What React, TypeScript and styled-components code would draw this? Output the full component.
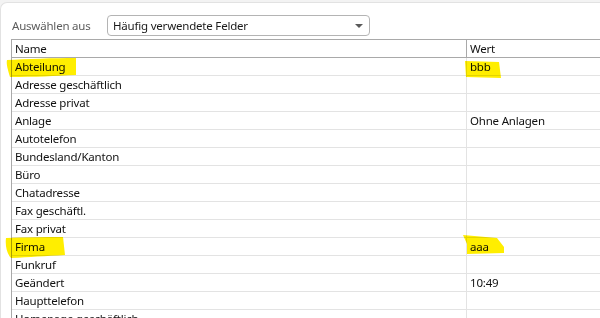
import styled, { createGlobalStyle } from "styled-components";

const GlobalStyle = createGlobalStyle`
  html, body {
    margin: 0;
    padding: 0;
    background: #f3f3f3;
    overflow: hidden;
  }
  body {
    font-family: "Noto Sans", "Open Sans", sans-serif;
    letter-spacing: -0.2px;
  }
`;

type Row = {
  name: string;
  value?: string;
  nameMark?: string;
  valueMark?: string;
};

// marker strokes, coordinates relative to the cell's top-left corner
const markAbteilung = "M-8 2 C10 1 40 0 61 0 L61 17 C40 18 20 19 -5 19 C-7 12 -9 6 -8 2 Z";
const markBbb = "M-4 3 L30 4 L32 20 L-3 19 Z";
const markFirma = "M-9 0 C10 -1 30 -1 48 -1 L50 17 C30 18 15 19 -4 20 C-8 16 -10 8 -9 0 Z";
const markAaa = "M-6 -3 L28 0 L35 9 L35 15 L-2 16 L-2 6 Z";

const rows: Row[] = [
  { name: "Abteilung", value: "bbb", nameMark: markAbteilung, valueMark: markBbb },
  { name: "Adresse geschäftlich" },
  { name: "Adresse privat" },
  { name: "Anlage", value: "Ohne Anlagen" },
  { name: "Autotelefon" },
  { name: "Bundesland/Kanton" },
  { name: "Büro" },
  { name: "Chatadresse" },
  { name: "Fax geschäftl." },
  { name: "Fax privat" },
  { name: "Firma", value: "aaa", nameMark: markFirma, valueMark: markAaa },
  { name: "Funkruf" },
  { name: "Geändert", value: "10:49" },
  { name: "Haupttelefon" },
  { name: "Homepage geschäftlich" },
];

function Marker({ d }: { d: string }) {
  return (
    <MarkSvg width="120" height="40" viewBox="-20 -10 120 40">
      <path d={d} fill="#ffee00" />
    </MarkSvg>
  );
}

export default function App() {
  return (
    <>
      <GlobalStyle />
      <Panel>
        <Toolbar>
          <Label>Auswählen aus</Label>
          <Select>
            <span>Häufig verwendete Felder</span>
            <Arrow />
          </Select>
        </Toolbar>
        <Table>
          <HeaderRow>
            <HeadCell>Name</HeadCell>
            <HeadCell $divider>Wert</HeadCell>
          </HeaderRow>
          {rows.map((r) => (
            <BodyRow key={r.name}>
              <NameCell>
                {r.nameMark && <Marker d={r.nameMark} />}
                <Text>{r.name}</Text>
              </NameCell>
              <ValueCell>
                {r.valueMark && <Marker d={r.valueMark} />}
                <Text>{r.value}</Text>
              </ValueCell>
            </BodyRow>
          ))}
        </Table>
      </Panel>
    </>
  );
}

const Panel = styled.div`
  margin-top: 2px;
  height: 316px;
  background: #ffffff;
  border-top: 1px solid #e2e2e2;
  border-left: 1px solid #e2e2e2;
  border-top-left-radius: 7px;
  overflow: hidden;
`;

const Toolbar = styled.div`
  display: flex;
  align-items: center;
  height: 21px;
  padding: 12px 0 0 11px;
  margin-bottom: 3px;
`;

const Label = styled.div`
  width: 95px;
  font-size: 11.5px;
  color: #5c5c5c;
`;

const Select = styled.div`
  box-sizing: border-box;
  display: flex;
  align-items: center;
  justify-content: space-between;
  width: 263px;
  height: 21px;
  padding: 0 6px 0 5px;
  border: 1px solid #b4b4b4;
  border-radius: 4px;
  font-size: 11.5px;
  color: #1a1a1a;
`;

const Arrow = styled.span`
  width: 0;
  height: 0;
  border-left: 4px solid transparent;
  border-right: 4px solid transparent;
  border-top: 4px solid #5a5a5a;
  margin-top: 1px;
`;

const Table = styled.div`
  margin-left: 10px;
  width: 700px;
  border-left: 1px solid #a9a9a9;
  border-top: 1px solid #a9a9a9;
  font-size: 11.5px;
  color: #111;
`;

const HeaderRow = styled.div`
  display: grid;
  grid-template-columns: 454px 1fr;
  height: 17px;
  border-bottom: 1px solid #a9a9a9;
`;

const HeadCell = styled.div<{ $divider?: boolean }>`
  display: flex;
  align-items: center;
  padding-left: 3px;
  border-left: ${(p) => (p.$divider ? "1px solid #a9a9a9" : "none")};
`;

const BodyRow = styled.div`
  display: grid;
  grid-template-columns: 454px 1fr;
  height: 17px;
  border-bottom: 1px solid #e3e3e3;
`;

const NameCell = styled.div`
  position: relative;
  display: flex;
  align-items: center;
  padding-left: 3px;
  border-right: 1px solid #e3e3e3;
  margin-right: -1px;
`;

const ValueCell = styled.div`
  position: relative;
  display: flex;
  align-items: center;
  padding-left: 4px;
`;

const Text = styled.span`
  position: relative;
  white-space: nowrap;
`;

const MarkSvg = styled.svg`
  position: absolute;
  left: -17px;
  top: -10px;
  pointer-events: none;
  z-index: 1;
  mix-blend-mode: multiply;
`;
